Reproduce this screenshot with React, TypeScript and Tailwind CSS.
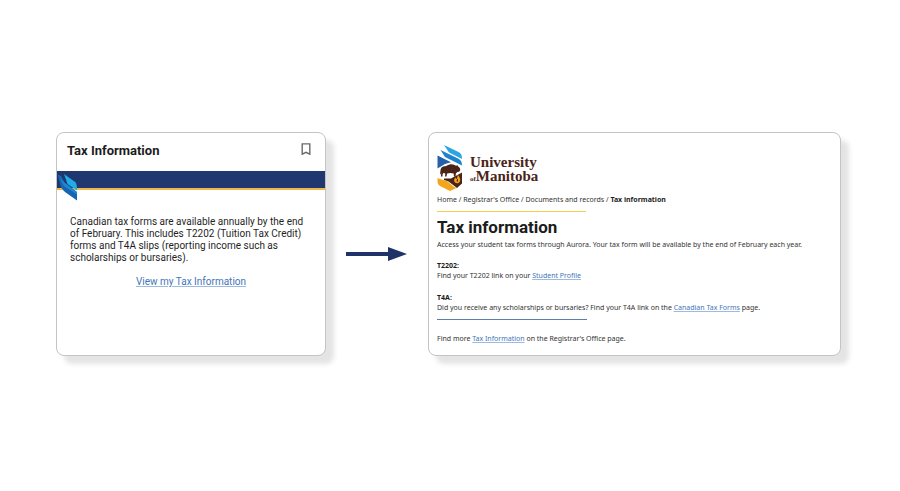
import type { ReactNode } from "react";

function TextLink({ children }: { children: ReactNode }) {
  return (
    <a href="#" className="text-[#3f76b8] underline decoration-[#9dbbe0] decoration-1 underline-offset-1">
      {children}
    </a>
  );
}

function BookmarkIcon() {
  return (
    <svg viewBox="0 0 10 12" className="h-3 w-[10px]" fill="none" stroke="#6a6a6a" strokeWidth="1.4" aria-hidden="true">
      <path d="M1.200 0.900h7.600v10.300L5 9.300l-3.800 1.900z" />
    </svg>
  );
}

function FlagMark() {
  return (
    <svg viewBox="0 0 21 30" className="absolute left-0 top-0 h-[30px] w-[21px]" aria-hidden="true">
      <path d="M0.500 3.500 4 5 8 12l12 9v8.500L8 21C5 18.500 3.500 16 3 12z" fill="#1766b3" />
      <path d="M3 7.500 8 12l12 9v2.500L7 15z" fill="#2187cd" />
      <path d="M7 3 17.500 10.500C19.500 12 20 14 20 19.500L10.500 13z" fill="#20ace6" />
    </svg>
  );
}

function Crest() {
  return (
    <svg viewBox="0 0 26 46" className="h-[46px] w-[26px] shrink-0" aria-hidden="true">
      <path d="M7 0 21.500 7C24 8.500 25 10 25 14L12 7.500z" fill="#2ba6e0" />
      <path d="M3.500 5 21 13.500c3 1.600 4 3.500 4 7L8 12z" fill="#1e83cc" />
      <path d="M0.500 10.500 14 17.300 8 19 0.500 23.500z" fill="#2560ab" />
      <path d="M3.500 25c.3-2.300 2-3.500 4.200-3.700 2.200-.2 3.300-1.900 5.800-2.100 2.400-.2 4.200.6 5.500 1.500l1.500-.5.700 1.200c1.500.8 2.300 2.300 2 3.800l-1.100 1.500-1.800.3-1.400 1.500-.4 3h-1.600l-.2-3-3.400-.4-3.200.5-.6 2.900H8l.3-2.800-1.400-1-1.200 1.300-.3 2.500H3.900l.4-4-.6 2-.6-.4z" fill="#4a2418" />
      <path d="M7 33.500 14 33.500 25 27.500v11l-5 4.500-8.500-6.500L7 35z" fill="#4a2418" />
      <path d="M0.500 33c3.500 2 6.500 1.500 9.500 3.200 3 1.700 5 4.800 9.500 6.800L13 46 3 41C1 40 .5 38 .5 36z" fill="#f3a51c" />
      <path d="M20.500 29.500c2 2.500 3.300 4.500 2.500 6.700-.8 2.300-4.300 2.800-5.500.6-.9-1.800.1-3.300 1-4.300l.7 1.800c1.200-1.400 1.700-3 1.300-4.800z" fill="#f3a51c" />
      <path d="M20.500 33.500c.8 1.500.8 2.600-.3 3.400-.9-.5-.6-1.800.3-3.400z" fill="#4a2418" />
    </svg>
  );
}

function Arrow() {
  return (
    <svg viewBox="0 0 61 14" className="mt-[115px] h-[14px] w-[61px]" fill="#1f3368" aria-hidden="true">
      <path d="M0 5h42V0l19 7-19 7V9H0z" />
    </svg>
  );
}

const card =
  "min-h-56 overflow-hidden rounded-lg border border-[#c4c4c6] bg-white shadow-[8px_8px_5px_0px_#e4e4e4]";

function TaxCard() {
  return (
    <section className={card}>
      <header className="flex h-[38px] items-center justify-between pb-[2px] pl-[10px] pr-[14px]">
        <h2 className="text-[13px] font-bold leading-4 text-[#1c1c1c]">Tax Information</h2>
        <button type="button" aria-label="Bookmark" className="pb-1">
          <BookmarkIcon />
        </button>
      </header>
      <div className="relative h-[19px] border-b-2 border-[#f0b74b] bg-[#1f386f]">
        <FlagMark />
      </div>
      <div className="px-[13px] pt-[26px]">
        <p className="text-[10px] leading-3 text-[#1f1f1f]">
          Canadian tax forms are available annually by the end of February. This includes T2202 (Tuition Tax Credit)
          forms and T4A slips (reporting income such as scholarships or bursaries).
        </p>
        <p className="mt-3 text-center text-[10px] leading-3">
          <TextLink>View my Tax Information</TextLink>
        </p>
      </div>
    </section>
  );
}

function TaxPage() {
  return (
    <section className={`${card} px-2 pt-3 pb-[10px] font-['Noto_Sans',sans-serif] text-[7px] leading-[10px] text-[#333]`}>
      <div className="flex items-center gap-[7px]">
        <Crest />
        <div className="pt-1 font-['Liberation_Serif',serif] text-[15px] font-bold leading-[14px] text-[#4a2418]">
          <div>University</div>
          <div className="flex items-baseline">
            <span className="text-[7px]">of</span>
            <span>Manitoba</span>
          </div>
        </div>
      </div>
      <nav aria-label="Breadcrumb" className="mt-1">
        <a href="#">Home</a> / <a href="#">Registrar's Office</a> / <a href="#">Documents and records</a> /{" "}
        <span className="font-bold text-[#1c1c1c]">Tax information</span>
      </nav>
      <div className="mt-[6px] w-[149px] border-t border-[#f6cb4e]" />
      <h1 className="mt-[5px] font-[Roboto,sans-serif] text-[17px] font-bold leading-5 text-[#1c1c1c]">Tax information</h1>
      <p className="mt-[3px]">
        Access your student tax forms through Aurora. Your tax form will be available by the end of February each year.
      </p>
      <h2 className="mt-[11px] font-bold text-[#1c1c1c]">T2202:</h2>
      <p>
        Find your T2202 link on your <TextLink>Student Profile</TextLink>
      </p>
      <h2 className="mt-3 font-bold text-[#1c1c1c]">T4A:</h2>
      <p>
        Did you receive any scholarships or bursaries? Find your T4A link on the <TextLink>Canadian Tax Forms</TextLink>{" "}
        page.
      </p>
      <div className="mt-[6px] w-[150px] border-t border-[#5d7fae]" />
      <p className="mt-[14px]">
        Find more <TextLink>Tax Information</TextLink> on the Registrar's Office page.
      </p>
    </section>
  );
}

export default function App() {
  return (
    <main className="grid min-h-screen grid-cols-[minmax(0,270fr)_62px_minmax(0,413fr)] items-start gap-5 bg-white pt-33 pl-14 pr-[59px] font-[Roboto,sans-serif]">
      <TaxCard />
      <Arrow />
      <TaxPage />
    </main>
  );
}
